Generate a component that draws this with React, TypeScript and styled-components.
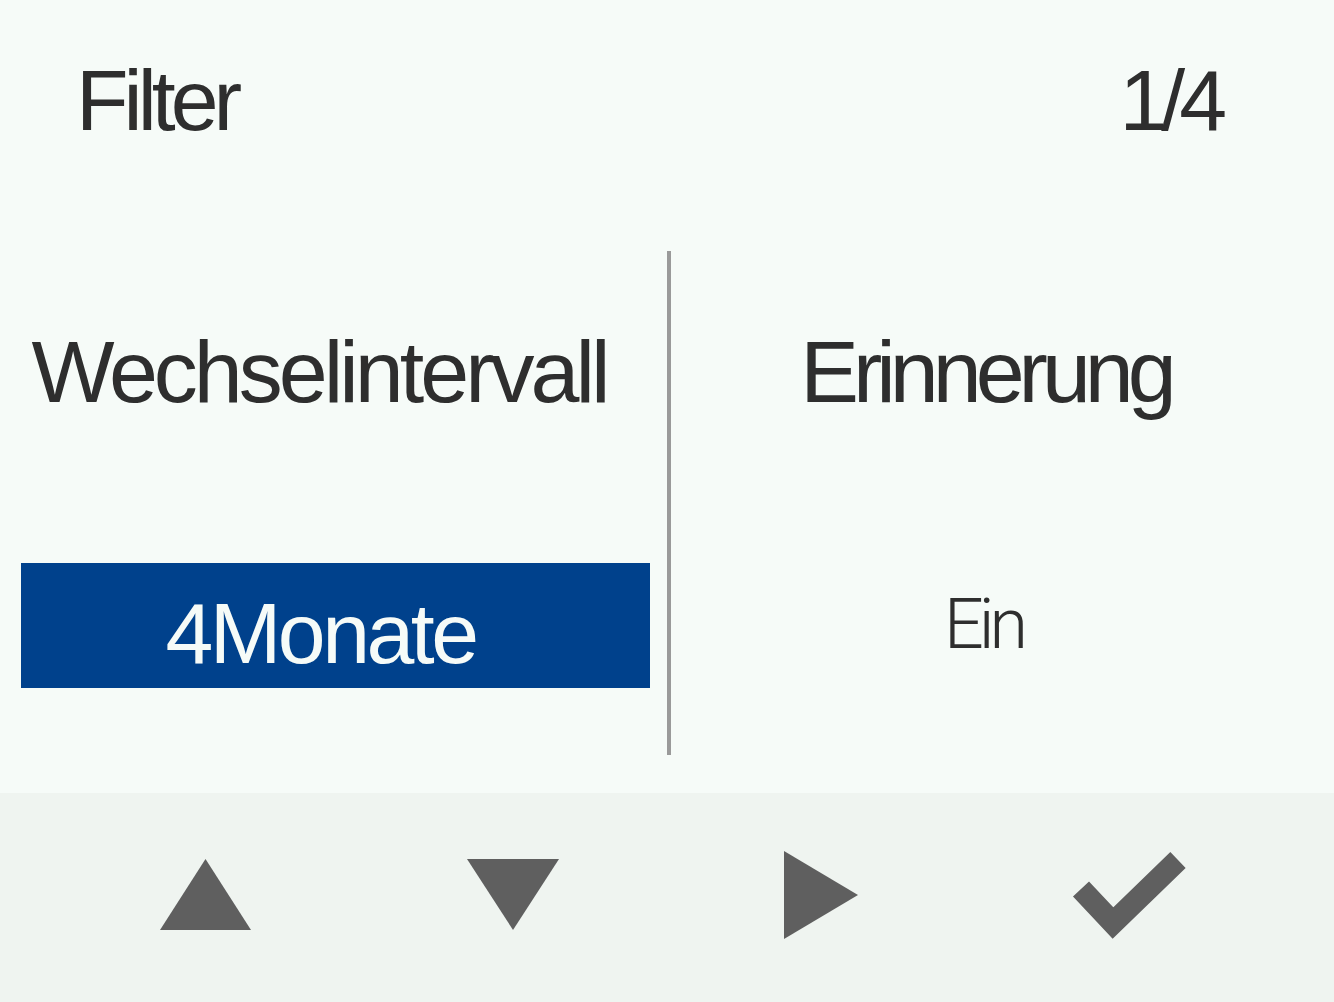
import React from 'react'
import styled, { createGlobalStyle } from 'styled-components'

const GlobalStyle = createGlobalStyle`
  html, body {
    margin: 0;
    padding: 0;
    background: #f6fbf8;
  }
  body {
    font-family: "Liberation Sans", Arial, sans-serif;
    color: #2e2e2e;
  }
`

const Screen = styled.div`
  width: 1334px;
  height: 1002px;
  display: flex;
  flex-direction: column;
  background: #f6fbf8;
  overflow: hidden;
`

const Header = styled.header`
  height: 251px;
  box-sizing: border-box;
  padding: 57px 113px 0 76px;
  display: flex;
  justify-content: space-between;
  align-items: flex-start;
`

const HeaderText = styled.div<{ $spacing: number }>`
  font-size: 86px;
  line-height: 86px;
  letter-spacing: ${(p) => p.$spacing}px;
`

const Columns = styled.main`
  height: 504px;
  display: grid;
  grid-template-columns: 667px 4px 1fr;
`

const Divider = styled.div`
  background: #9a9a9a;
`

const Column = styled.section`
  display: flex;
  flex-direction: column;
  padding-top: 77px;
`

const Label = styled.div<{ $spacing: number; $shift: number }>`
  font-size: 88px;
  line-height: 88px;
  letter-spacing: ${(p) => p.$spacing}px;
  text-align: center;
  padding-right: ${(p) => p.$shift}px;
  white-space: nowrap;
`

const ValueBox = styled.div<{ $selected?: boolean }>`
  margin: 147px 17px 0 21px;
  height: 125px;
  box-sizing: border-box;
  padding-top: ${(p) => (p.$selected ? 27 : 26)}px;
  background: ${(p) => (p.$selected ? '#00418c' : 'transparent')};
  color: ${(p) => (p.$selected ? '#f6fbf8' : '#2e2e2e')};
`

const ValueText = styled.div<{ $light?: boolean }>`
  text-align: center;
  padding-right: ${(p) => (p.$light ? 42 : 30)}px;
  white-space: nowrap;
  font-family: ${(p) => (p.$light ? 'Roboto, "Liberation Sans", sans-serif' : '"Liberation Sans", Arial, sans-serif')};
  font-weight: ${(p) => (p.$light ? 300 : 400)};
  font-size: ${(p) => (p.$light ? 70 : 86)}px;
  line-height: ${(p) => (p.$light ? 70 : 86)}px;
  letter-spacing: ${(p) => (p.$light ? -5 : -3.5)}px;
`

const Footer = styled.footer`
  margin-top: 38px;
  flex: 1;
  background: #eff4f0;
  display: grid;
  grid-template-columns: repeat(4, 308px);
  padding: 0 0 6px 51px;
  box-sizing: border-box;
`

const KeyButton = styled.button`
  border: none;
  background: transparent;
  padding: 0;
  display: flex;
  align-items: center;
  justify-content: center;
  cursor: pointer;
`

const ICON = '#5f5f5f'

const UpIcon = () => (
  <svg width="91" height="71" viewBox="0 0 91 71">
    <polygon points="0,71 45.5,0 91,71" fill={ICON} />
  </svg>
)

const DownIcon = () => (
  <svg width="92" height="71" viewBox="0 0 92 71">
    <polygon points="0,0 92,0 46,71" fill={ICON} />
  </svg>
)

const RightIcon = () => (
  <svg width="74" height="88" viewBox="0 0 74 88" style={{ marginTop: 1 }}>
    <polygon points="0,0 74,44 0,88" fill={ICON} />
  </svg>
)

const CheckIcon = () => (
  <svg width="116" height="88" viewBox="0 0 116 88">
    <polyline
      points="10,38 42,72 107,9"
      fill="none"
      stroke={ICON}
      strokeWidth="22"
      strokeLinejoin="miter"
    />
  </svg>
)

export default function App() {
  return (
    <>
      <GlobalStyle />
      <Screen>
        <Header>
          <HeaderText $spacing={-5}>Filter</HeaderText>
          <HeaderText $spacing={-6}>1/4</HeaderText>
        </Header>
        <Columns>
          <Column>
            <Label $spacing={-4} $shift={29}>Wechselintervall</Label>
            <ValueBox $selected>
              <ValueText>4Monate</ValueText>
            </ValueBox>
          </Column>
          <Divider />
          <Column>
            <Label $spacing={-6} $shift={34}>Erinnerung</Label>
            <ValueBox>
              <ValueText $light>Ein</ValueText>
            </ValueBox>
          </Column>
        </Columns>
        <Footer>
          <KeyButton aria-label="up">
            <UpIcon />
          </KeyButton>
          <KeyButton aria-label="down">
            <DownIcon />
          </KeyButton>
          <KeyButton aria-label="next">
            <RightIcon />
          </KeyButton>
          <KeyButton aria-label="confirm">
            <CheckIcon />
          </KeyButton>
        </Footer>
      </Screen>
    </>
  )
}
